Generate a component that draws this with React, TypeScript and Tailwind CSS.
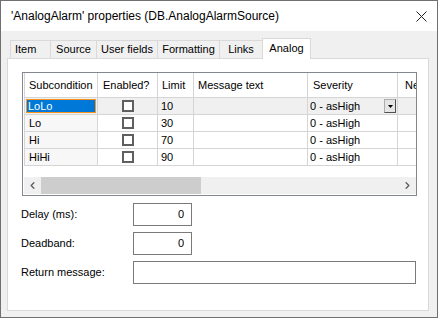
import { ChevronLeft, ChevronRight } from "lucide-react";

const font = { fontFamily: '"Liberation Sans", Arial, sans-serif' };

const tabs = [
  { label: "Item", w: "w-[41px] justify-start pl-[4px]" },
  { label: "Source", w: "w-[47px] justify-center" },
  { label: "User fields", w: "w-[62px] justify-center" },
  { label: "Formatting", w: "w-[63px] justify-center" },
  { label: "Links", w: "w-[44px] justify-center" },
];

const rows = [
  { name: "LoLo", limit: "10" },
  { name: "Lo", limit: "30" },
  { name: "Hi", limit: "70" },
  { name: "HiHi", limit: "90" },
];

function Checkbox() {
  return <span className="block w-[12px] h-[12px] border-2 border-[#5f5f5f] bg-white" />;
}

function Field({ label, value, wide }: { label: string; value?: string; wide?: boolean }) {
  return (
    <div className="flex items-center h-[23px]">
      <span className="w-[112px] shrink-0">{label}</span>
      <div
        className={`h-[23px] border border-[#7a7a7a] bg-white flex items-center justify-end pr-[7px] ${
          wide ? "w-[283px]" : "w-[59px]"
        }`}
      >
        {value}
      </div>
    </div>
  );
}

export default function App() {
  return (
    <div
      className="w-[438px] h-[318px] border border-[#707070] flex flex-col text-[11px] text-black bg-white overflow-hidden"
      style={font}
    >
      {/* title bar */}
      <div className="h-[30px] shrink-0 flex items-center pl-[10px] pr-[10px] bg-white">
        <span className="flex-1 text-[12px]">'AnalogAlarm' properties (DB.AnalogAlarmSource)</span>
        <svg width="11" height="11" viewBox="0 0 11 11">
          <path d="M0.5 0.5 L10.5 10.5 M10.5 0.5 L0.5 10.5" stroke="#222" strokeWidth="1" />
        </svg>
      </div>

      {/* body */}
      <div className="flex-1 bg-[#f0f0f0] pl-[6px] pr-[8px] pt-[7px] pb-[6px] flex flex-col">
        {/* tabs */}
        <div className="h-[20px] flex items-end pl-[3px] relative z-10">
          {tabs.map((t, i) => (
            <div
              key={t.label}
              className={`${t.w} h-[18px] ${i > 0 ? "-ml-px" : ""} border border-b-0 border-[#d9d9d9] bg-[#f0f0f0] flex items-center`}
            >
              {t.label}
            </div>
          ))}
          <div className="w-[49px] h-[21px] -ml-px -mb-px border border-b-0 border-[#d9d9d9] bg-white flex items-center justify-center pb-[2px]">
            Analog
          </div>
        </div>

        {/* panel */}
        <div className="h-[253px] bg-white border border-[#d9d9d9] pl-[14px] pr-[11px] pt-[13px] flex flex-col">
          {/* grid */}
          <div className="h-[124px] w-[395px] border border-[#828790] pl-px flex flex-col overflow-hidden">
            <div className="flex flex-col overflow-hidden w-[392px]">
              {/* header */}
              <div className="flex h-[25px] shrink-0 whitespace-nowrap">
                <div className="w-[74px] shrink-0 border-l border-r border-b border-[#d5d5d5] flex items-center pl-[4px]">Subcondition</div>
                <div className="w-[60px] shrink-0 border-r border-b border-[#d5d5d5] flex items-center pl-[5px]">Enabled?</div>
                <div className="w-[36px] shrink-0 border-r border-b border-[#d5d5d5] flex items-center pl-[4px]">Limit</div>
                <div className="w-[114px] shrink-0 border-r border-b border-[#d5d5d5] flex items-center pl-[4px]">Message text</div>
                <div className="w-[90px] shrink-0 border-r border-b border-[#d5d5d5] flex items-center pl-[5px]">Severity</div>
                <div className="w-[40px] shrink-0 border-b border-[#d5d5d5] flex items-center pl-[7px]">Nesting</div>
              </div>
              {rows.map((r, i) => {
                const sel = i === 0;
                const bg = sel ? "bg-[#f0f0f0]" : "bg-white";
                return (
                  <div key={r.name} className={`flex h-[17px] shrink-0 whitespace-nowrap ${bg}`}>
                    <div
                      className={`w-[74px] shrink-0 border-l border-r border-b border-[#d5d5d5] flex items-center ${
                        sel ? "p-px" : "bg-[#f7f7f7] pl-[4px]"
                      }`}
                    >
                      {sel ? (
                        <div className="w-full h-full bg-[#0078d7] border border-[#f7941d] text-white flex items-center pl-px">
                          {r.name}
                        </div>
                      ) : (
                        r.name
                      )}
                    </div>
                    <div className="w-[60px] shrink-0 border-r border-b border-[#d5d5d5] flex items-center justify-center">
                      <Checkbox />
                    </div>
                    <div className="w-[36px] shrink-0 border-r border-b border-[#d5d5d5] flex items-center pl-[3px]">{r.limit}</div>
                    <div className="w-[114px] shrink-0 border-r border-b border-[#d5d5d5]" />
                    <div className="w-[90px] shrink-0 border-r border-b border-[#d5d5d5] flex items-center pl-[2px] pr-[1px]">
                      <span className="flex-1">0 - asHigh</span>
                      {sel && (
                        <span className="w-[12px] h-[14px] bg-[#e5e5e5] border border-[#adadad] border-r-[#505050] border-b-[#505050] flex items-center justify-center">
                          <svg width="5" height="3" viewBox="0 0 5 3">
                            <path d="M0 0 H5 L2.5 3 Z" fill="#000" />
                          </svg>
                        </span>
                      )}
                    </div>
                    <div className="w-[40px] shrink-0 border-b border-[#d5d5d5]" />
                  </div>
                );
              })}
            </div>
            <div className="flex-1" />
            {/* horizontal scrollbar */}
            <div className="h-[17px] mb-px flex bg-[#f0f0f0] w-[392px]">
              <div className="w-[17px] flex items-center justify-center text-[#606060]">
                <ChevronLeft size={11} strokeWidth={3} />
              </div>
              <div className="w-[160px] bg-[#cdcdcd]" />
              <div className="flex-1" />
              <div className="w-[17px] flex items-center justify-center text-[#606060]">
                <ChevronRight size={11} strokeWidth={3} />
              </div>
            </div>
          </div>

          {/* fields */}
          <div className="flex flex-col gap-[6px] mt-[7px] -ml-[1px]">
            <Field label="Delay (ms):" value="0" />
            <Field label="Deadband:" value="0" />
            <Field label="Return message:" wide />
          </div>
        </div>
      </div>
    </div>
  );
}
